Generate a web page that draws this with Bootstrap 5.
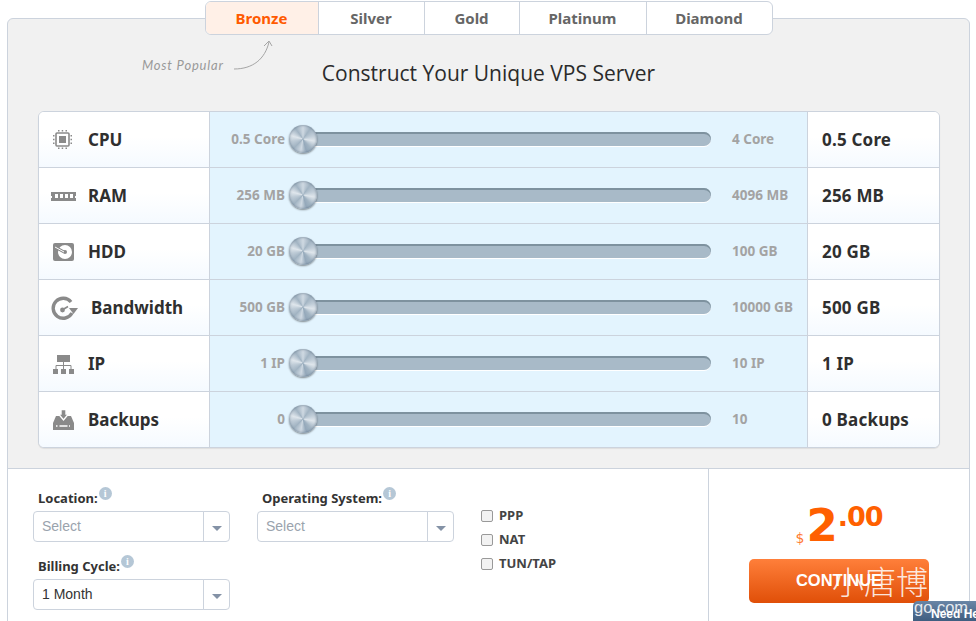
<!DOCTYPE html>
<html lang="en">
<head>
<meta charset="utf-8">
<title>Construct Your Unique VPS Server</title>
<link href="https://cdn.jsdelivr.net/npm/bootstrap@5.3.0/dist/css/bootstrap.min.css" rel="stylesheet">
<style>
html,body{height:621px;overflow:hidden;background:#fff;}
body{font-family:"Noto Sans",sans-serif;color:#2f2f2f;position:relative;}
.page-wrap{padding:1px 6px 0 7px;height:621px;overflow:hidden;}
.plan-tabs{width:568px;height:34px;margin:0 auto -17px;position:relative;z-index:2;background:#fff;border:1px solid #ccd3dd;border-radius:6px;overflow:hidden;}
.plan-tab{display:flex;align-items:center;justify-content:center;font-size:15px;font-weight:700;color:#666;border-right:1px solid #ccd3dd;}
.plan-tab:last-child{border-right:0;}
.plan-tab.on{background:#fff0e7;color:#ff5a00;}
.panel-box{border:1px solid #ccd3dd;border-radius:6px 6px 0 0;background:#f1f1f1;height:700px;position:relative;}
.head-zone{height:449px;padding:92px 29px 0 30px;position:relative;}
.main-title{position:absolute;left:0;right:0;top:42px;text-align:center;font-size:21px;font-weight:400;margin:0;color:#2b2b2b;font-family:"Open Sans","Noto Sans",sans-serif;}
.hint-text{position:absolute;left:134px;top:38px;font:italic 13px "Lato",sans-serif;letter-spacing:.8px;color:#999;}
.hint-arrow{position:absolute;left:225px;top:20px;}
.spec-table{border:1px solid #ccd3dd;border-radius:6px;overflow:hidden;background:#fff;box-shadow:0 1px 1px rgba(0,0,0,.08);}
.spec-row{height:56px;border-bottom:1px solid #ccd3dd;}
.spec-row:last-child{height:55px;border-bottom:0;}
.spec-name{width:171px;background:linear-gradient(#fff 45%,#f5faff);border-right:1px solid #ccd3dd;padding-left:12px;font-size:17px;font-weight:700;color:#2f2f2f;}
.spec-icon{width:25px;height:24px;margin-right:12px;flex:none;}
.spec-name.wide-gap .spec-icon{margin-right:13px;width:27px;}
.spec-slider{width:598px;background:#e3f4fe;border-right:1px solid #ccd3dd;font-size:13.500px;font-weight:700;color:#a3a3a3;}
.lim-low{width:75px;text-align:right;flex:none;}
.slide-rail{width:408px;height:14px;margin:0 21px 1px 18px;flex:none;position:relative;background:#a8bac8;border-radius:0 7px 7px 0;box-shadow:inset 0 2px 0 #7e929f,0 1px 0 #fff;}
.slide-knob{position:absolute;left:-14px;top:-7px;width:28px;height:28px;border-radius:50%;box-shadow:0 1px 2px rgba(0,0,0,.45),inset 0 0 2px 1px rgba(90,110,130,.45);background:conic-gradient(#cfd9e2 0deg,#a2b4c3 35deg,#bfccd7 70deg,#dfe6ec 100deg,#a2b4c3 140deg,#94a8ba 165deg,#cfd9e2 190deg,#a2b4c3 225deg,#bfccd7 260deg,#dfe6ec 285deg,#a2b4c3 325deg,#cfd9e2 360deg);}
.spec-value{flex:1;background:linear-gradient(#fff 45%,#f5faff);padding-left:14px;font-size:17px;font-weight:700;color:#2f2f2f;letter-spacing:.2px;}
.bottom-zone{background:#fff;border-top:1px solid #ccd3dd;height:260px;}
.opts-side{width:701px;border-right:1px solid #ccd3dd;padding:15px 0 0 25px;flex:none;}
.opt-label{font-size:13px;font-weight:700;color:#333;margin:0 0 3px 5px;display:flex;align-items:flex-start;height:24px;padding-top:5px;}
.opt-label.next-label{margin-top:10px;height:24px;}
.info-dot{width:13px;height:13px;border-radius:50%;background:#b5c7d6;color:#fff;font:700 10px/13px "Liberation Serif",serif;text-align:center;margin:-2px 0 0 1px;}
.pick-box{width:197px;height:31px;}
.pick-box .form-control{font:14px "Liberation Sans",sans-serif;padding:0 8px 2px;border-color:#ccd3dd;border-radius:4px 0 0 4px;color:#333;height:31px;box-shadow:none;}
.pick-box .form-control::placeholder{color:#9aa3ad;}
.pick-caret{width:27px;background:#fff;border-color:#ccd3dd;padding:0;justify-content:center;border-radius:0 4px 4px 0;}
.pick-caret::after{content:"";border-left:5px solid transparent;border-right:5px solid transparent;border-top:5px solid #8492a6;margin-top:3px;}
.opt-col{width:224px;flex:none;}
.check-col{padding-top:24px;}
.check-col .form-check{min-height:0;margin:0 0 8px;padding-left:18px;height:16px;display:flex;align-items:center;}
.check-col .form-check-input{width:12px;height:12px;margin:0 0 0 -18px;border-color:#999;border-radius:2px;background-color:#f2f2f2;flex:none;}
.check-col .form-check-label{font-size:13px;font-weight:700;color:#444;margin-left:6px;}
.buy-side{flex:1;padding-top:27px;text-align:center;}
.price-line{color:#ff6000;font-family:"DejaVu Sans",sans-serif;font-weight:700;height:63px;line-height:1;display:flex;justify-content:center;align-items:flex-start;}
.price-cur{font-size:14px;font-weight:400;margin-top:35px;color:#ff7a33;}
.price-big{font-size:45px;margin:7px 0 0 2px;}
.price-sub{font-size:27px;margin-top:7px;letter-spacing:-1px;}
.go-btn{display:flex;align-items:center;justify-content:center;width:180px;height:44px;margin:0 auto 0 40px;border:0;border-radius:5px;background:linear-gradient(#ff7f3a,#e04f08);color:#fff;font:700 16.500px "Liberation Sans",sans-serif;padding:0 0 2px;}
.water-mark{position:absolute;left:832px;top:558px;font:200 32px "Noto Sans CJK SC",sans-serif;color:rgba(255,255,255,.85);line-height:44px;width:97px;overflow:hidden;white-space:nowrap;z-index:3;}
.help-tag{position:absolute;left:913px;top:601px;width:63px;height:20px;background:linear-gradient(#6a86a6,#3f5d80);border-radius:5px 0 0 0;overflow:hidden;z-index:3;color:#fff;}
.help-tag b{position:absolute;left:18px;top:6px;font:700 12px "Liberation Sans",sans-serif;white-space:nowrap;}
.site-frag{position:absolute;left:1px;top:-3px;font:16.500px "Liberation Sans",sans-serif;white-space:nowrap;opacity:.85;}
</style>
</head>
<body>
<div class="page-wrap">
  <div class="plan-tabs d-flex">
    <div class="plan-tab on" style="width:113px">Bronze</div>
    <div class="plan-tab" style="width:106px">Silver</div>
    <div class="plan-tab" style="width:95px">Gold</div>
    <div class="plan-tab" style="width:127px">Platinum</div>
    <div class="plan-tab" style="width:125px">Diamond</div>
  </div>
  <div class="panel-box">
    <div class="head-zone">
      <span class="hint-text">Most Popular</span>
      <svg class="hint-arrow" width="42" height="34" viewBox="0 0 42 34" fill="none" stroke="#a5a5a5" stroke-width="1"><path d="M1 30C20 30 32 20 36 3"/><path d="M31 7L36 2L39 7"/></svg>
      <h1 class="main-title">Construct Your Unique VPS Server</h1>
      <div class="spec-table">
        <div class="spec-row d-flex">
          <div class="spec-name d-flex align-items-center"><svg class="spec-icon" viewBox="0 0 25 24" fill="#8a8a8a"><rect x="5" y="5" width="13" height="13" rx="1" fill="none" stroke="#8a8a8a" stroke-width="1.600"/><rect x="8" y="8" width="7" height="7"/><path d="M7 2h1.500v1.500H7zM10.700 2h1.500v1.500h-1.500zM14.500 2H16v1.500h-1.500zM7 19.500h1.500V21H7zM10.700 19.500h1.500V21h-1.500zM14.500 19.500H16V21h-1.500zM2 7h1.500v1.500H2zM2 10.700h1.500v1.500H2zM2 14.500h1.500V16H2zM19.500 7H21v1.500h-1.500zM19.500 10.700H21v1.500h-1.500zM19.500 14.500H21V16h-1.500z"/></svg>CPU</div>
          <div class="spec-slider d-flex align-items-center"><span class="lim-low">0.5 Core</span><div class="slide-rail"><span class="slide-knob"></span></div><span>4 Core</span></div>
          <div class="spec-value d-flex align-items-center">0.5 Core</div>
        </div>
        <div class="spec-row d-flex">
          <div class="spec-name d-flex align-items-center"><svg class="spec-icon" viewBox="0 0 25 24" fill="#8a8a8a"><path d="M0 8h25v4h-1v2h1v3H0v-3h1v-2H0z"/><path fill="#fff" d="M4 10h3v4H4zM9 10h3v4H9zM14 10h3v4h-3zM19 10h3v4h-3z"/></svg>RAM</div>
          <div class="spec-slider d-flex align-items-center"><span class="lim-low">256 MB</span><div class="slide-rail"><span class="slide-knob"></span></div><span>4096 MB</span></div>
          <div class="spec-value d-flex align-items-center">256 MB</div>
        </div>
        <div class="spec-row d-flex">
          <div class="spec-name d-flex align-items-center"><svg class="spec-icon" viewBox="0 0 25 24"><rect x="2" y="3" width="21" height="18" rx="2" fill="#8a8a8a"/><circle cx="14" cy="12" r="7" fill="#fff"/><circle cx="14" cy="12" r="2" fill="#8a8a8a"/><path d="M4 7l9 5" stroke="#8a8a8a" stroke-width="3"/><path d="M4 7l9 5" stroke="#fff" stroke-width="1"/></svg>HDD</div>
          <div class="spec-slider d-flex align-items-center"><span class="lim-low">20 GB</span><div class="slide-rail"><span class="slide-knob"></span></div><span>100 GB</span></div>
          <div class="spec-value d-flex align-items-center">20 GB</div>
        </div>
        <div class="spec-row d-flex">
          <div class="spec-name wide-gap d-flex align-items-center"><svg class="spec-icon" viewBox="0 0 27 24" fill="none"><path d="M20 6A10 10 0 1 0 21 17" stroke="#8a8a8a" stroke-width="3.400"/><path d="M18 12h9l-4.500 6z" fill="#8a8a8a"/><circle cx="11.500" cy="14" r="2.400" fill="#8a8a8a"/><path d="M12 13.500l5-3" stroke="#8a8a8a" stroke-width="1.600"/></svg>Bandwidth</div>
          <div class="spec-slider d-flex align-items-center"><span class="lim-low">500 GB</span><div class="slide-rail"><span class="slide-knob"></span></div><span>10000 GB</span></div>
          <div class="spec-value d-flex align-items-center">500 GB</div>
        </div>
        <div class="spec-row d-flex">
          <div class="spec-name d-flex align-items-center"><svg class="spec-icon" viewBox="0 0 25 24" fill="#8a8a8a"><rect x="6" y="3" width="13" height="7"/><path d="M12.500 10v3M5 17v-3.500h15V17M12.500 13v4" stroke="#8a8a8a" fill="none"/><rect x="2" y="17" width="5" height="5"/><rect x="10" y="17" width="5" height="5"/><rect x="18" y="17" width="5" height="5"/></svg>IP</div>
          <div class="spec-slider d-flex align-items-center"><span class="lim-low">1 IP</span><div class="slide-rail"><span class="slide-knob"></span></div><span>10 IP</span></div>
          <div class="spec-value d-flex align-items-center">1 IP</div>
        </div>
        <div class="spec-row d-flex">
          <div class="spec-name d-flex align-items-center"><svg class="spec-icon" viewBox="0 0 25 24" fill="#8a8a8a"><path d="M5 8h15l3 7v7H2v-7z"/><path d="M7.500 6h2.500V1.500h5V6h2.500l-5 6z" stroke="#fff" stroke-width="1.400"/><path d="M5 18h1.500M8.500 18h8M18 18h1" stroke="#fff" stroke-width="1.400"/></svg>Backups</div>
          <div class="spec-slider d-flex align-items-center"><span class="lim-low">0</span><div class="slide-rail"><span class="slide-knob"></span></div><span>10</span></div>
          <div class="spec-value d-flex align-items-center">0 Backups</div>
        </div>
      </div>
    </div>
    <div class="bottom-zone d-flex">
      <div class="opts-side d-flex">
        <div class="opt-col">
          <label class="opt-label">Location:<span class="info-dot">i</span></label>
          <div class="input-group flex-nowrap pick-box"><input class="form-control" placeholder="Select"><span class="input-group-text pick-caret"></span></div>
          <label class="opt-label next-label">Billing Cycle:<span class="info-dot">i</span></label>
          <div class="input-group flex-nowrap pick-box"><input class="form-control" value="1 Month"><span class="input-group-text pick-caret"></span></div>
        </div>
        <div class="opt-col">
          <label class="opt-label">Operating System:<span class="info-dot">i</span></label>
          <div class="input-group flex-nowrap pick-box"><input class="form-control" placeholder="Select"><span class="input-group-text pick-caret"></span></div>
        </div>
        <div class="check-col">
          <div class="form-check"><input class="form-check-input" type="checkbox" id="c1"><label class="form-check-label" for="c1">PPP</label></div>
          <div class="form-check"><input class="form-check-input" type="checkbox" id="c2"><label class="form-check-label" for="c2">NAT</label></div>
          <div class="form-check"><input class="form-check-input" type="checkbox" id="c3"><label class="form-check-label" for="c3">TUN/TAP</label></div>
        </div>
      </div>
      <div class="buy-side">
        <div class="price-line"><span class="price-cur">$</span><span class="price-big">2</span><span class="price-sub">.00</span></div>
        <button class="btn go-btn" type="button">CONTINUE</button>
      </div>
    </div>
  </div>
</div>
<div class="water-mark">小唐博</div>
<div class="help-tag"><span class="site-frag">go.com</span><b>Need He</b></div>
</body>
</html>
